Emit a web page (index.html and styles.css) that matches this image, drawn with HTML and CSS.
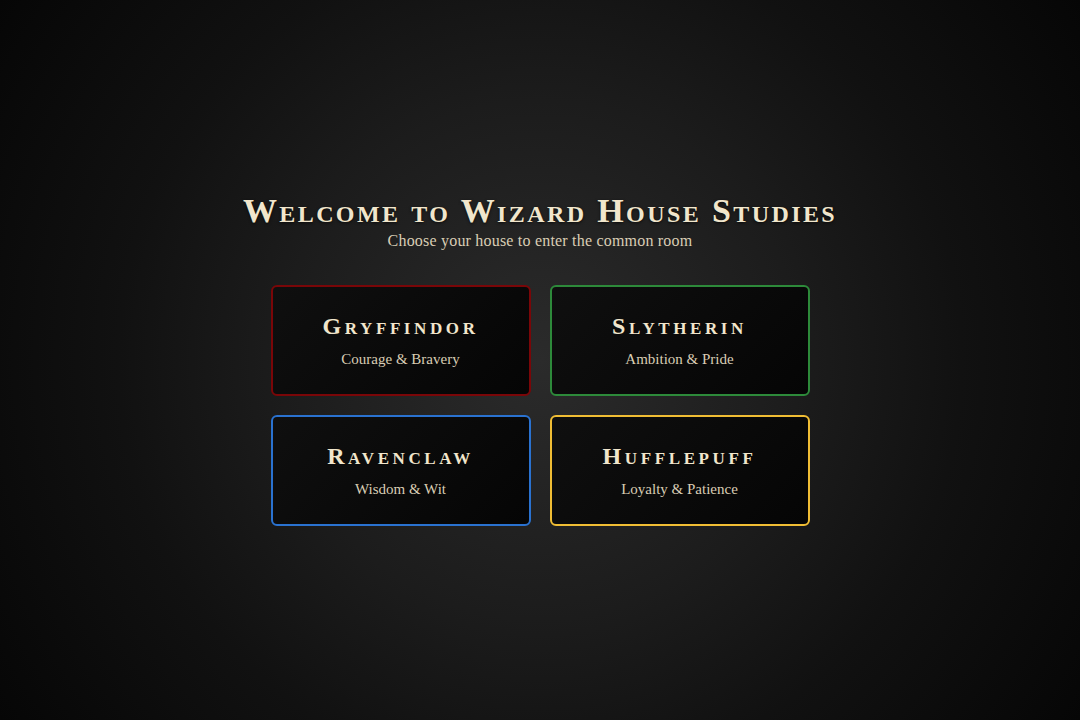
FILE: index.html
```html
<!DOCTYPE html>
<html lang="en">
<head>
<meta charset="utf-8">
<title>Wizard House Studies</title>
<link rel="stylesheet" href="styles.css">
</head>
<body>
<main class="page">
  <header class="intro">
    <h1 class="title">Welcome to Wizard House Studies</h1>
    <p class="subtitle">Choose your house to enter the common room</p>
  </header>
  <section class="houses">
    <a class="house house-gryffindor" href="#">
      <h2 class="house-name">Gryffindor</h2>
      <p class="house-trait">Courage &amp; Bravery</p>
    </a>
    <a class="house house-slytherin" href="#">
      <h2 class="house-name">Slytherin</h2>
      <p class="house-trait">Ambition &amp; Pride</p>
    </a>
    <a class="house house-ravenclaw" href="#">
      <h2 class="house-name">Ravenclaw</h2>
      <p class="house-trait">Wisdom &amp; Wit</p>
    </a>
    <a class="house house-hufflepuff" href="#">
      <h2 class="house-name">Hufflepuff</h2>
      <p class="house-trait">Loyalty &amp; Patience</p>
    </a>
  </section>
</main>
</body>
</html>
```
FILE: styles.css
```css
html, body {
  margin: 0;
  padding: 0;
  height: 100%;
}
body {
  background: radial-gradient(circle at 50% 50%, #2b2b2b 0%, #1c1c1c 40%, #111111 65%, #060606 100%);
  color: #efe4cc;
  font-family: "Liberation Serif", "DejaVu Serif", serif;
}
.page {
  min-height: 100vh;
  display: flex;
  flex-direction: column;
  align-items: center;
  justify-content: center;
  box-sizing: border-box;
  padding-bottom: 4px;
}
.intro {
  text-align: center;
  margin-bottom: 35px;
}
.title {
  margin: 0;
  font-size: 34px;
  font-weight: bold;
  font-variant: small-caps;
  letter-spacing: 2.4px;
  line-height: 40px;
  color: #f1e6cc;
  text-shadow: 0 1px 3px rgba(0,0,0,0.7);
}
.subtitle {
  margin: 0;
  font-size: 16px;
  line-height: 19px;
  letter-spacing: 0.2px;
  color: #d9cdb4;
}
.houses {
  display: grid;
  grid-template-columns: 260px 260px;
  gap: 19px 19px;
}
.house {
  display: flex;
  flex-direction: column;
  align-items: center;
  justify-content: center;
  height: 111px;
  box-sizing: border-box;
  border: 2px solid;
  border-radius: 6px;
  background: linear-gradient(135deg, #0f0f0f 0%, #050505 100%);
  text-decoration: none;
  color: inherit;
}
.house-gryffindor { border-color: #7a0608; }
.house-slytherin { border-color: #2d8a3a; }
.house-ravenclaw { border-color: #2a72d0; }
.house-hufflepuff { border-color: #f0bd34; }
.house-name {
  margin: 0 0 10px;
  font-size: 24px;
  font-weight: bold;
  font-variant: small-caps;
  letter-spacing: 3.6px;
  line-height: 28px;
  color: #f1e6cc;
}
.house-trait {
  margin: 0;
  font-size: 15px;
  line-height: 18px;
  color: #d9cdb4;
}
```
